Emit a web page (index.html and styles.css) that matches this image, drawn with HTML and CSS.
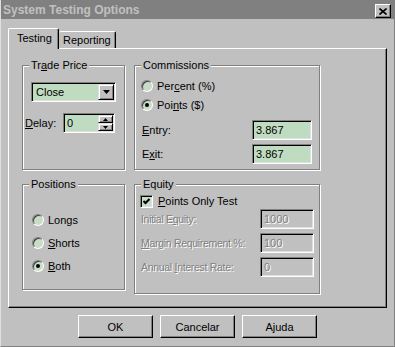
FILE: index.html
```html
<!DOCTYPE html>
<html lang="en">
<head>
  <meta charset="UTF-8" />
  <title>System Testing Options</title>
  <link rel="stylesheet" href="styles.css">
</head>
<body>
  <div class="window">
    <div class="titlebar">
      <span class="title">System Testing Options</span>
      <button class="close" type="button">
        <svg width="8" height="7" viewBox="0 0 8 7"><path d="M0.5 0.5L7.5 6.5M7.5 0.5L0.5 6.5" stroke="#000" stroke-width="1.6" fill="none"/></svg>
      </button>
    </div>

    <!-- Tabs -->
    <div class="tabs">
      <div class="tab active">Testing</div>
      <div class="tab">Reporting</div>
    </div>

    <div class="panel">
      <div class="group">
        <span class="group-title">Tr<u>a</u>de Price</span>
        <div class="combo">
          <span class="combo-text">Close</span>
          <span class="combo-btn"><svg width="7" height="4" viewBox="0 0 7 4"><path d="M0 0H7L3.5 4Z" fill="#000"/></svg></span>
        </div>
        <div class="delay">
          <span class="delay-label"><u>D</u>elay:</span>
          <div class="spin">
            <span class="spin-text">0</span>
            <span class="spin-btns">
              <span class="spin-btn"><svg width="5" height="3" viewBox="0 0 5 3"><path d="M2.5 0L5 3H0Z" fill="#000"/></svg></span>
              <span class="spin-btn"><svg width="5" height="3" viewBox="0 0 5 3"><path d="M0 0H5L2.5 3Z" fill="#000"/></svg></span>
            </span>
          </div>
        </div>
      </div>

      <div class="group">
        <span class="group-title">Commissions</span>
        <div class="opts comm-opts">
          <div class="radio-row"><span class="radio"></span><span>Per<u>c</u>ent (%)</span></div>
          <div class="radio-row"><span class="radio checked"></span><span>Poi<u>n</u>ts ($)</span></div>
        </div>
        <div class="field-row entry">
          <span class="field-label"><u>E</u>ntry:</span>
          <span class="input green">3.867</span>
        </div>
        <div class="field-row exit">
          <span class="field-label">E<u>x</u>it:</span>
          <span class="input green">3.867</span>
        </div>
      </div>

      <div class="group positions">
        <span class="group-title">Positions</span>
        <div class="opts pos-opts">
          <div class="radio-row tall"><span class="radio"></span><span>Lon<u>g</u>s</span></div>
          <div class="radio-row tall"><span class="radio"></span><span><u>S</u>horts</span></div>
          <div class="radio-row tall"><span class="radio checked"></span><span><u>B</u>oth</span></div>
        </div>
      </div>

      <div class="group equity">
        <span class="group-title">Equity</span>
        <div class="check-row">
          <span class="check"><svg width="7" height="7" viewBox="0 0 7 7"><path d="M0.5 3L2.5 5L6.5 1" stroke="#000" stroke-width="2" fill="none"/></svg></span>
          <span><u>P</u>oints Only Test</span>
        </div>
        <div class="field-row eq-row first disabled">
          <span class="field-label eq-label">Initial E<u>q</u>uity:</span>
          <span class="input small">1000</span>
        </div>
        <div class="field-row eq-row disabled">
          <span class="field-label eq-label"><u>M</u>argin Requirement %:</span>
          <span class="input small">100</span>
        </div>
        <div class="field-row eq-row disabled">
          <span class="field-label eq-label">Annual <u>I</u>nterest Rate:</span>
          <span class="input small">0</span>
        </div>
      </div>
    </div>

    <div class="buttons">
      <button class="btn" type="button">OK</button>
      <button class="btn" type="button">Cancelar</button>
      <button class="btn" type="button">Ajuda</button>
    </div>
  </div>
</body>
</html>
```

FILE: styles.css
```css
body {
  margin: 0;
  background-color: #c0c0c0;
}
.window {
  width: 395px;
  height: 347px;
  box-sizing: border-box;
  border-left: 1px solid #dfdfdf;
  border-right: 1px solid #808080;
  border-bottom: 1px solid #808080;
  background-color: #c0c0c0;
  font-family: "Liberation Sans", Arial, sans-serif;
  font-size: 11px;
  color: #000;
}
.titlebar {
  height: 19px;
  background-color: #808080;
  display: flex;
  align-items: center;
  justify-content: space-between;
  padding: 0 3px 0 2px;
}
.title {
  font-weight: bold;
  font-size: 12px;
  color: #c0c0c0;
}
.close {
  align-self: flex-start;
  margin-top: 4px;
  width: 16px;
  height: 14px;
  padding: 0;
  box-sizing: border-box;
  border: 1px solid;
  border-color: #fff #000 #000 #fff;
  box-shadow: inset -1px -1px #808080;
  background-color: #c0c0c0;
  display: flex;
  align-items: center;
  justify-content: center;
}

/* Tabs */
.tabs {
  display: flex;
  align-items: flex-end;
  height: 21px;
  margin: 9px 0 -1px 7px;
}
.tab {
  box-sizing: border-box;
  height: 17px;
  margin-bottom: 1px;
  width: 57px;
  padding-left: 4px;
  line-height: 16px;
  border-top: 1px solid #fff;
  border-right: 1px solid #000;
  box-shadow: inset -1px 0 #808080;
  border-radius: 2px 2px 0 0;
  background-color: #c0c0c0;
}
.tab.active {
  position: relative;
  z-index: 1;
  width: 51px;
  height: 21px;
  margin-bottom: 0;
  padding-left: 8px;
  line-height: 19px;
  border-left: 1px solid #fff;
}

.panel {
  margin-left: 7px;
  width: 379px;
  height: 260px;
  box-sizing: border-box;
  border: 1px solid;
  border-color: #fff #000 #000 #fff;
  box-shadow: inset -1px -1px #808080;
  display: grid;
  grid-template-columns: 103px 186px;
  grid-template-rows: 105px auto;
  column-gap: 9px;
  row-gap: 14px;
  padding: 16px 0 0 13px;
  align-items: start;
}

/* Group boxes */
.group {
  box-sizing: border-box;
  height: 105px;
  border: 1px solid #808080;
  box-shadow: 1px 1px 0 #fff, inset 1px 1px 0 #fff;
}
.group.positions {
  height: 106px;
}
.group.equity {
  height: 110px;
}
.group-title {
  display: block;
  width: fit-content;
  margin: -7px 0 0 6px;
  padding: 0 2px;
  line-height: 13px;
  background-color: #c0c0c0;
}

/* Sunken fields */
.combo, .spin, .input, .check {
  box-sizing: border-box;
  border: 1px solid;
  border-color: #808080 #fff #fff #808080;
  box-shadow: inset 1px 1px #000, inset -1px -1px #dfdfdf;
}
.combo {
  margin: 10px 0 0 8px;
  width: 85px;
  height: 20px;
  padding: 1px;
  display: flex;
  align-items: center;
  background-color: #c0dcc0;
}
.combo-text {
  flex: 1;
  padding-left: 3px;
}
.combo-btn, .spin-btn {
  box-sizing: border-box;
  border: 1px solid;
  border-color: #dfdfdf #000 #000 #dfdfdf;
  box-shadow: inset 1px 1px #fff, inset -1px -1px #808080;
  background-color: #c0c0c0;
  display: flex;
  align-items: center;
  justify-content: center;
}
.combo-btn {
  width: 16px;
  height: 16px;
}
.delay {
  display: flex;
  align-items: center;
  margin: 11px 0 0 2px;
}
.delay-label {
  width: 38px;
}
.spin {
  width: 52px;
  height: 20px;
  padding: 1px;
  display: flex;
  background-color: #c0dcc0;
}
.spin-text {
  flex: 1;
  padding-left: 2px;
  line-height: 16px;
}
.spin-btns {
  display: flex;
  flex-direction: column;
  width: 15px;
}
.spin-btn {
  height: 8px;
}

/* Radios and checkbox */
.opts {
  display: flex;
  flex-direction: column;
}
.comm-opts {
  margin: 4px 0 0 6px;
}
.pos-opts {
  margin: 17px 0 0 9px;
}
.radio-row {
  display: flex;
  align-items: center;
  gap: 4px;
  height: 19px;
}
.radio-row.tall {
  height: 23px;
}
.radio {
  width: 12px;
  height: 12px;
  box-sizing: border-box;
  border-radius: 50%;
  border: 1px solid;
  border-color: #808080 #fff #fff #808080;
  box-shadow: inset 1px 1px #404040;
  background-color: #c8dcc8;
  display: flex;
  align-items: center;
  justify-content: center;
}
.radio.checked::after {
  content: "";
  width: 4px;
  height: 4px;
  border-radius: 50%;
  background-color: #000;
}
.check-row {
  display: flex;
  align-items: center;
  gap: 5px;
  height: 16px;
  margin: 2px 0 0 5px;
}
.check {
  width: 13px;
  height: 13px;
  background-color: #c8dcc8;
  display: flex;
  align-items: center;
  justify-content: center;
}

/* Label + field rows */
.field-row {
  display: flex;
  align-items: center;
  justify-content: space-between;
}
.field-label {
  margin-left: 7px;
}
.input {
  height: 20px;
  line-height: 18px;
  padding-left: 3px;
}
.input.green {
  width: 60px;
  margin-right: 7px;
  background-color: #c0dcc0;
}
.entry {
  margin-top: 6px;
}
.exit {
  margin-top: 4px;
}
.eq-row {
  margin-top: 4px;
}
.eq-row.first {
  margin-top: 0;
}
.eq-label {
  margin-left: 6px;
  font-size: 10.5px;
  letter-spacing: -0.3px;
}
.input.small {
  width: 54px;
  margin-right: 5px;
  background-color: #c0c0c0;
}
.disabled .field-label, .disabled .input {
  color: #808080;
  text-shadow: 1px 1px 0 #fff;
}

/* Buttons */
.buttons {
  display: flex;
  justify-content: center;
  gap: 7px;
  margin-top: 7px;
}
.btn {
  width: 75px;
  height: 23px;
  padding: 0;
  box-sizing: border-box;
  border: 1px solid;
  border-color: #fff #000 #000 #fff;
  box-shadow: inset -1px -1px #808080;
  background-color: #c0c0c0;
  font-family: inherit;
  font-size: 11px;
  color: #000;
}
```
